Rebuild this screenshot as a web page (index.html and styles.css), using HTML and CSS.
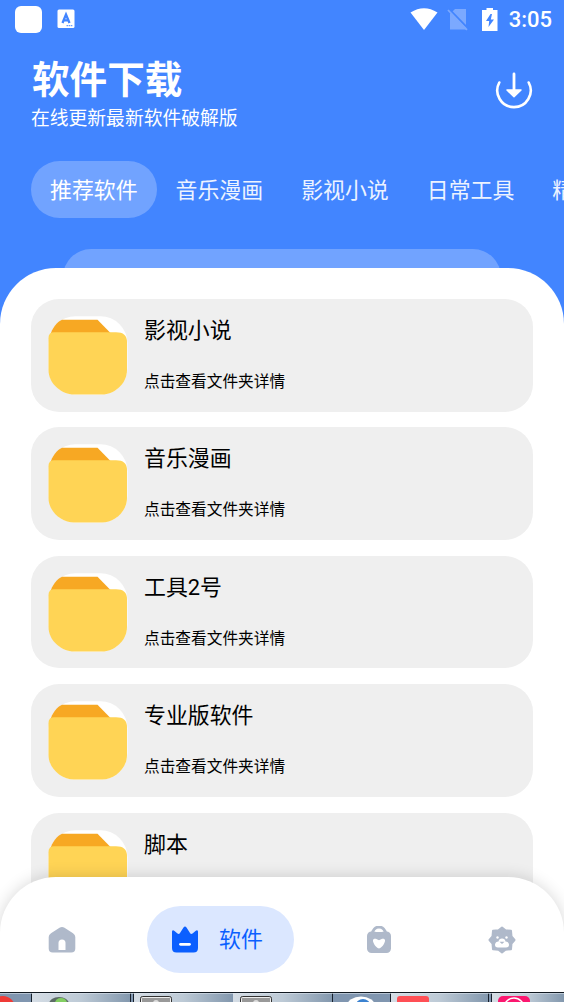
FILE: index.html
```html
<!DOCTYPE html>
<html lang="zh-CN">
<head>
  <meta charset="UTF-8">
  <meta name="viewport" content="width=device-width, initial-scale=1.0">
  <title>软件下载</title>
  <link rel="stylesheet" href="styles.css">
</head>
<body>
  <!-- shared folder icon -->
  <svg class="defs" width="0" height="0">
    <symbol id="folder" viewBox="0 0 80 80">
      <rect x="0.5" y="0.3" width="79" height="78.500" rx="27" fill="#fff"/>
      <path d="M2 20C4 12 9 6 14 3.800H49.500L62 16.500V24H2z" fill="#f7a823"/>
      <path d="M0.500 22Q0.500 16.300 6 16.300H68Q79 16.300 79 26V54C79 68 66 78.500 54 78.500H26C14 78.500 0.500 68 0.500 54z" fill="#ffd455"/>
    </symbol>
  </svg>

  <div class="app">
    <div class="status-bar">
      <span class="app-square"></span>
      <svg class="input-icon" width="18" height="20" viewBox="0 0 18 20">
        <rect x="0.500" y="0.500" width="17" height="18.500" rx="1.500" fill="#fff"/>
        <path d="M5.500 14L9 5.500L12.500 14M6.800 11.300H11.200" fill="none" stroke="#4285ff" stroke-width="2.300"/>
        <path d="M9.500 16.700H16" stroke="#4285ff" stroke-width="1" stroke-dasharray="1.500 .6"/>
      </svg>
      <div class="status-right">
        <svg class="wifi" width="28" height="22" viewBox="0 0 28 22"><path d="M0.500 4.500Q14-4 27.500 4.500L14 22z" fill="#fff"/></svg>
        <svg class="sim" width="22" height="23" viewBox="0 0 22 23">
          <path d="M8 1H19V21.500H3V6z" fill="#7ba9ff"/>
          <path d="M2 1L21 20.500" stroke="#4285ff" stroke-width="2"/>
          <path d="M1 2L20 21.800" stroke="#7ba9ff" stroke-width="1.800"/>
        </svg>
        <svg class="battery" width="16" height="23" viewBox="0 0 16 23">
          <path d="M4.500 0H11V2H15.500V23H0V2H4.500z" fill="#fff"/>
          <path d="M8.500 6L4 13H7.200L6.500 19L12 11.500H8.800L10 6z" fill="#4285ff"/>
        </svg>
        <span class="clock">3:05</span>
      </div>
    </div>

    <header>
      <div>
        <h1>软件下载</h1>
        <p>在线更新最新软件破解版</p>
      </div>
      <svg class="download" width="38" height="38" viewBox="0 0 38 38" fill="none" stroke="#fff" stroke-linecap="round">
        <path d="M4.300 11.500A16.700 16.700 0 1 0 33.700 11.500" stroke-width="2.600"/>
        <path d="M19 3V20" stroke-width="2.800"/>
        <path d="M12 19H26L19 25.800z" fill="#fff" stroke-width="1.500" stroke-linejoin="round"/>
      </svg>
    </header>

    <div class="tabs">
      <span class="tab active">推荐软件</span>
      <span class="tab">音乐漫画</span>
      <span class="tab">影视小说</span>
      <span class="tab">日常工具</span>
      <span class="tab">精品软件</span>
    </div>

    <div class="banner"></div>

    <main class="sheet">
      <div class="card">
        <svg class="folder"><use href="#folder"/></svg>
        <div class="info"><h2>影视小说</h2><p>点击查看文件夹详情</p></div>
      </div>
      <div class="card">
        <svg class="folder"><use href="#folder"/></svg>
        <div class="info"><h2>音乐漫画</h2><p>点击查看文件夹详情</p></div>
      </div>
      <div class="card">
        <svg class="folder"><use href="#folder"/></svg>
        <div class="info"><h2>工具2号</h2><p>点击查看文件夹详情</p></div>
      </div>
      <div class="card">
        <svg class="folder"><use href="#folder"/></svg>
        <div class="info"><h2>专业版软件</h2><p>点击查看文件夹详情</p></div>
      </div>
      <div class="card">
        <svg class="folder"><use href="#folder"/></svg>
        <div class="info"><h2>脚本</h2></div>
      </div>
    </main>

    <!-- fixed bottom area -->
    <div class="bottom">
      <nav>
        <span class="nav-item">
          <svg width="28" height="28" viewBox="0 0 28 28">
            <path d="M11.500 1.800Q14 0 16.500 1.800L25 7.300Q27.300 8.700 27.300 11V22.500Q27.300 26.500 23.300 26.500H4.700Q0.700 26.500 0.700 22.500V11Q0.700 8.700 3 7.300z" fill="#afb9ca"/>
            <path d="M10.500 24V17A3.500 3.500 0 0 1 17.500 17V24z" fill="#fff"/>
          </svg>
        </span>
        <span class="nav-item active">
          <svg width="28" height="28" viewBox="0 0 28 28">
            <path d="M1 5.500Q1.500 3.500 3.500 5L6.500 7.500Q8 8.700 9 7L12.500 1.500Q14-.5 15.500 1.500L19 7Q20 8.700 21.500 7.500L24.500 5Q26.500 3.500 27 5.500V22Q27 26.500 22.500 26.500H5.500Q1 26.500 1 22z" fill="#0b5fff"/>
            <path d="M9.500 18.300H18.500" stroke="#fff" stroke-width="2.800" stroke-linecap="round"/>
          </svg>
          <b>软件</b>
        </span>
        <span class="nav-item">
          <svg width="28" height="28" viewBox="0 0 28 28">
            <path d="M7.500 9V7.500A6.500 6.500 0 0 1 20.500 7.500V9" fill="none" stroke="#afb9ca" stroke-width="2.800"/>
            <rect x="2" y="5.500" width="24" height="21.500" rx="4.500" fill="#afb9ca"/>
            <path d="M9.500 6Q14 2 18.500 6z" fill="#fff"/>
            <path d="M14 22.500C10.500 21.500 7.500 16 8 14C8.800 11.800 11.500 12.500 14 14.300C16.500 12.500 19.200 11.800 20 14C20.500 16 17.500 21.500 14 22.500z" fill="#fff"/>
          </svg>
        </span>
        <span class="nav-item">
          <svg width="28" height="28" viewBox="0 0 28 28">
            <path d="M14 1.500L17.500 4.200L23 4.800L23.500 10.300L26.500 14L23.500 17.700L23 23.200L17.500 23.800L14 26.500L10.500 23.800L5 23.200L4.500 17.700L1.500 14L4.500 10.300L5 4.800L10.500 4.200z" fill="#afb9ca" stroke="#afb9ca" stroke-width="2" stroke-linejoin="round"/>
            <circle cx="9.500" cy="11.500" r="1.200" fill="#fff"/>
            <circle cx="18.500" cy="11.500" r="1.200" fill="#fff"/>
            <path d="M10 21.500Q6.800 21.500 7 18.500Q7.500 15.500 10.500 15.500Q11 12.500 14 12.500Q17 12.500 17.500 15.500Q20.500 15.500 21 18.500Q21.200 21.500 18 21.500z" fill="#fff"/>
            <path d="M11.500 15.800H16.500L14 18z" fill="#afb9ca"/>
          </svg>
        </span>
      </nav>

      <svg class="taskbar" width="564" height="10" viewBox="0 0 564 10">
        <defs>
          <linearGradient id="task" x1="0" x2="1" y1="0" y2="0">
            <stop offset="0" stop-color="#d5dde5"/>
            <stop offset="0.500" stop-color="#bdcad6"/>
            <stop offset="1" stop-color="#8398ae"/>
          </linearGradient>
        </defs>
        <rect width="564" height="10" fill="#8096b0"/>
        <rect x="32" y="1" width="98" height="9" fill="url(#task)"/>
        <rect x="134" y="1" width="98" height="9" fill="url(#task)"/>
        <rect x="233" y="1" width="99" height="9" fill="url(#task)"/>
        <rect x="391" y="1" width="97" height="9" fill="url(#task)"/>
        <rect x="492" y="1" width="72" height="9" fill="url(#task)"/>
        <path d="M31.500 0V10M130.500 0V10M133.500 0V10M332.500 0V10M390.500 0V10M488.500 0V10M491.500 0V10" stroke="#17212d"/>
        <path d="M0 1.500H564" stroke="#dce5ed" stroke-opacity=".6"/>
        <path d="M0 .5H564" stroke="#101820"/>
        <circle cx="3" cy="16" r="12" fill="#ef3a36"/>
        <ellipse cx="59" cy="12" rx="10" ry="7" fill="#5d6b67"/>
        <ellipse cx="61" cy="11" rx="6" ry="5" fill="#83cf62"/>
        <g fill="#999" stroke="#333">
          <rect x="140.500" y="4.500" width="31" height="12" rx="2"/>
          <rect x="240.500" y="4.500" width="31" height="12" rx="2"/>
        </g>
        <g fill="none" stroke="#eee">
          <rect x="141.500" y="5.500" width="29" height="12" rx="1"/>
          <rect x="241.500" y="5.500" width="29" height="12" rx="1"/>
        </g>
        <g fill="#ddd"><circle cx="156" cy="11" r="3"/><circle cx="256" cy="11" r="3"/></g>
        <ellipse cx="361" cy="14" rx="14" ry="9.500" fill="#fff"/>
        <ellipse cx="363" cy="13" rx="7" ry="6" fill="#3b82d0"/>
        <rect x="397" y="4" width="32" height="14" rx="3" fill="#ff4f55"/>
        <rect x="498" y="4" width="32" height="14" rx="5" fill="#fb176f"/>
        <circle cx="514" cy="16" r="10" fill="none" stroke="#fff" stroke-width="1.500"/>
      </svg>
    </div>
  </div>
</body>
</html>
```
FILE: styles.css
```css
* {
  box-sizing: border-box;
}

body {
  margin: 0;
  font-family: Roboto, "Noto Sans CJK SC", sans-serif;
  color: #000;
}

h1, h2, p {
  margin: 0;
  font-weight: 400;
}

svg {
  display: block;
  flex: none;
}

.defs {
  position: absolute;
}

.app {
  position: relative;
  display: flex;
  flex-direction: column;
  width: 564px;
  height: 1002px;
  overflow: hidden;
  background: #4285ff;
}

/* status bar */
.status-bar {
  display: flex;
  align-items: center;
  flex: none;
  height: 38px;
  padding: 0 12px 0 15px;
}

.app-square {
  width: 27px;
  height: 27px;
  border-radius: 6px;
  background: #fff;
}

.input-icon {
  margin-left: 15px;
}

.status-right {
  display: flex;
  align-items: center;
  margin-left: auto;
}

.sim {
  margin-left: 9px;
}

.battery {
  margin: 0 11px 0 13px;
}

.clock {
  color: #fff;
  font-size: 22px;
  font-weight: 500;
  line-height: 24px;
  padding-top: 2px;
}

/* header */
header {
  display: flex;
  justify-content: space-between;
  flex: none;
  height: 123px;
  padding: 18px 31px 0 32px;
  color: #fff;
}

header h1 {
  font-size: 37.6px;
  font-weight: 700;
  line-height: 48px;
}

header p {
  margin-top: 1px;
  margin-left: -1px;
  font-size: 18.8px;
  line-height: 28px;
}

.download {
  margin-top: 15px;
}

.tabs {
  display: flex;
  flex: none;
  height: 57px;
  padding-left: 31px;
}

.tab {
  flex: none;
  padding: 1px 19px 0;
  border-radius: 29px;
  color: #fff;
  font-size: 21.9px;
  line-height: 58px;
}

.tab:not(.active) {
  opacity: 0.9;
}

.tab.active {
  height: 57px;
  background: #71a3ff;
}

.banner {
  flex: none;
  height: 50px;
  margin: 31px 63px -31px;
  border-radius: 28px 28px 0 0;
  background: #71a3ff;
}

/* list */
.sheet {
  position: relative;
  display: flex;
  flex-direction: column;
  flex: 1;
  gap: 15.8px;
  min-height: 0;
  padding: 31px 31px 0;
  border-radius: 56px 56px 0 0;
  background: #fff;
}

.card {
  display: flex;
  flex: none;
  height: 112.6px;
  padding: 17px;
  border-radius: 28px;
  background: #efefef;
}

.folder {
  width: 80px;
  height: 80px;
}

.info {
  margin-left: 16px;
  padding-top: 1px;
}

.info h2 {
  font-size: 21.9px;
  line-height: 28px;
}

.info p {
  margin-top: 26px;
  font-size: 15.7px;
  line-height: 22px;
}

/* bottom navigation */
.bottom {
  position: absolute;
  left: 0;
  bottom: 0;
  width: 564px;
}

nav {
  display: flex;
  align-items: center;
  gap: 71px;
  height: 115px;
  padding: 10px 48px 0;
  border-radius: 56px 56px 0 0;
  background: #fff;
  box-shadow: 0 0 16px rgba(0, 0, 0, 0.16);
}

.nav-item {
  display: flex;
  align-items: center;
}

.nav-item:last-child {
  margin-left: auto;
}

.nav-item.active {
  gap: 20px;
  height: 67px;
  padding: 0 31px 0 24px;
  border-radius: 34px;
  background: #dbe7ff;
  color: #0b5fff;
}

.nav-item b {
  font-size: 21.9px;
  font-weight: 400;
  line-height: 28px;
}
```
